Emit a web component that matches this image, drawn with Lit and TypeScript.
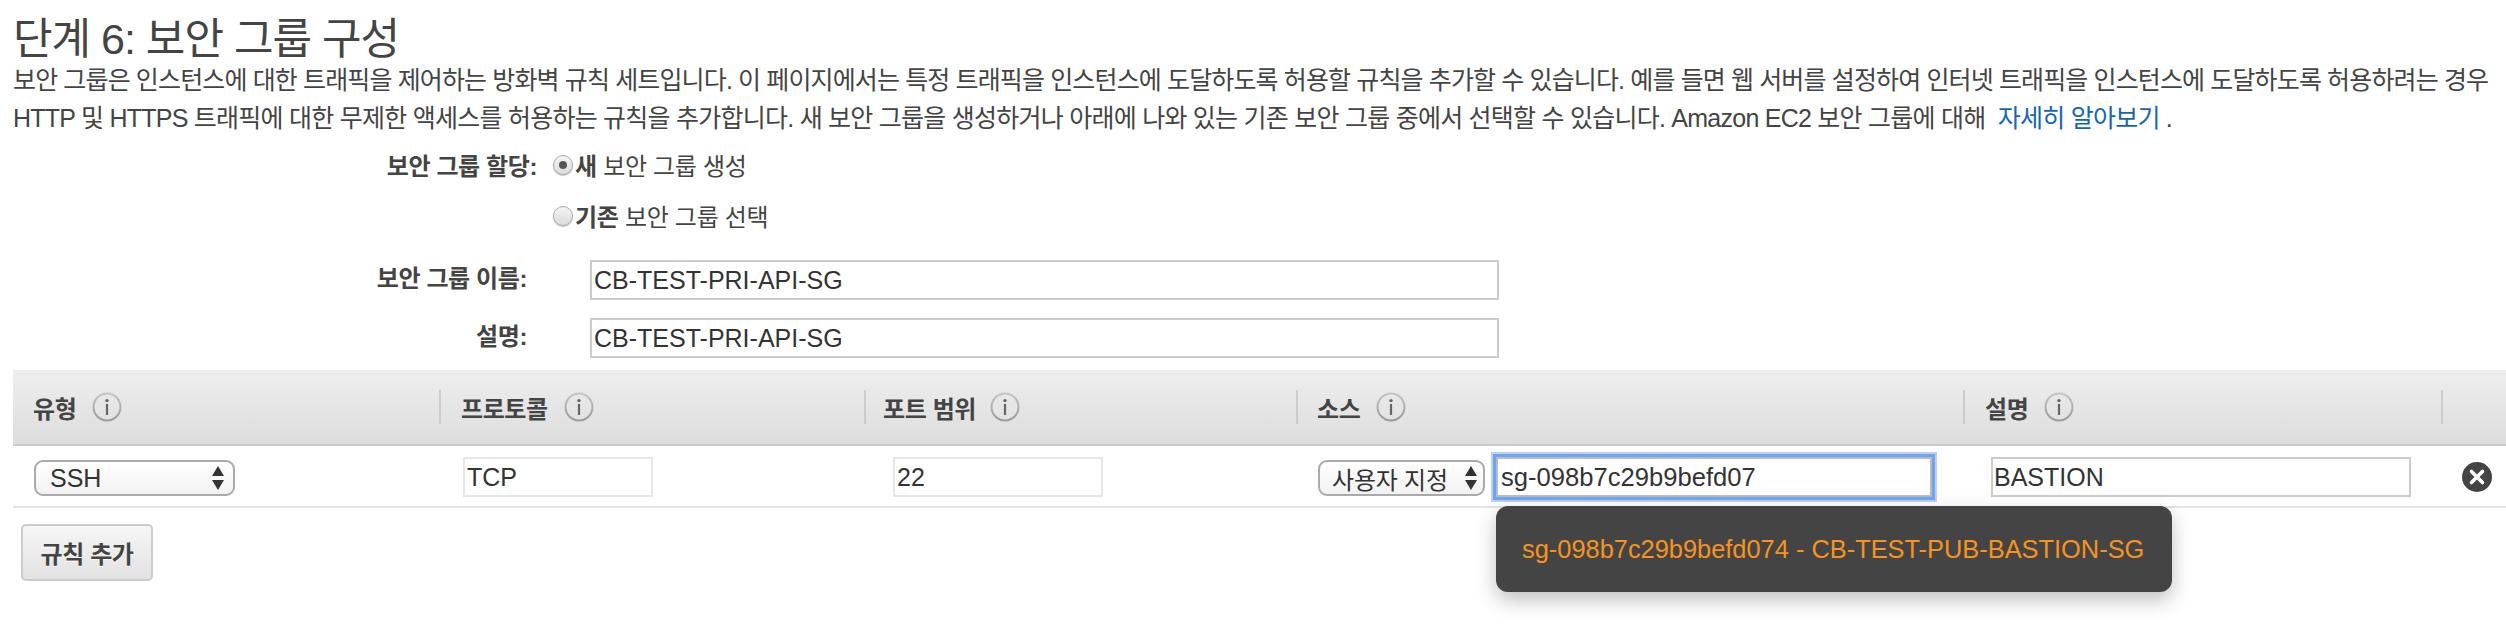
import { LitElement, html, css } from "lit";
import { customElement } from "lit/decorators.js";

const info = html`<svg class="info" width="30" height="30" viewBox="0 0 30 30">
  <defs><linearGradient id="ring" x1="0" y1="0" x2="0" y2="1"><stop offset="0" stop-color="#c4c4c4"/><stop offset="1" stop-color="#999"/></linearGradient></defs>
  <circle cx="15" cy="15" r="13.5" fill="none" stroke="url(#ring)" stroke-width="2"/>
  <circle cx="15" cy="8.6" r="1.7" fill="#666"/>
  <rect x="13.9" y="12" width="2.2" height="11" fill="#666"/>
</svg>`;

const arrows = html`<svg class="arrows" width="14" height="26" viewBox="0 0 14 26">
  <path d="M7 1 L13 11 H1 Z" fill="#333"/><path d="M7 25 L13 15 H1 Z" fill="#333"/>
</svg>`;

@customElement("app-root")
export class AppRoot extends LitElement {
  static styles = css`
    :host {
      display: block;
      width: 2506px;
      height: 630px;
      overflow: hidden;
      background: #fff;
      color: #444;
      font-family: "Liberation Sans", "Noto Sans CJK KR", sans-serif;
      font-size: 24px;
    }
    h1 {
      margin: 0;
      padding: 18px 0 0 13px;
      font-size: 43px;
      font-weight: 400;
      line-height: 43px;
      letter-spacing: -1px;
      color: #444;
    }
    p {
      margin: 0;
      padding-left: 13px;
      line-height: 38px;
      font-size: 25px;
      height: 78px;
    }
    .line { display: block; white-space: nowrap; }
    .l1 { letter-spacing: -0.86px; }
    .l2 { letter-spacing: -0.75px; }
    a { color: #1166bb; text-decoration: none; margin-left: 6px; }
    .form { display: flex; flex-direction: column; }
    .radio-row { display: flex; align-items: center; height: 51px; letter-spacing: -0.3px; }
    .label { font-weight: 700; text-align: right; flex: none; letter-spacing: -0.4px; }
    .label-radio { width: 537px; margin-right: 16px; }
    .indent { width: 553px; flex: none; }
    .radio {
      width: 20px;
      height: 20px;
      flex: none;
      border-radius: 50%;
      border: 1px solid #aaa;
      box-sizing: border-box;
      margin-right: 2px;
      background: linear-gradient(#f4f4f4, #dcdcdc);
      box-shadow: 0 1px 1px #bbb;
      display: flex;
      align-items: center;
      justify-content: center;
    }
    .radio.on::after {
      content: "";
      width: 8px;
      height: 8px;
      border-radius: 50%;
      background: #555;
    }
    .field-row { display: flex; align-items: center; height: 40px; }
    .field-row + .field-row { margin-top: 18px; }
    .field-row.first-field { margin-top: 19px; }
    .label-field { width: 527px; margin-right: 63px; position: relative; top: -4px; }
    input {
      font: inherit;
      font-size: 25px;
      color: #333;
      box-sizing: border-box;
      border: 2px solid #ccc;
      padding: 0 2px;
      height: 40px;
      background: #fff;
      outline: none;
      border-radius: 0;
      letter-spacing: 0;
    }
    .field-row input { width: 909px; }
    .table { margin: 12px 0 0 13px; width: 2493px; }
    .head, .row {
      display: grid;
      grid-template-columns: 426px 425px 432px 667px 478px 65px;
    }
    .head {
      height: 76px;
      box-sizing: border-box;
      border-bottom: 2px solid #ccc;
      background: linear-gradient(#eeeeee, #dddddd);
      align-items: center;
    }
    .h {
      display: flex;
      align-items: center;
      gap: 16px;
      height: 34px;
      padding-left: 20px;
      font-weight: 700;
      letter-spacing: -0.4px;
      border-left: 2px solid #ccc;
    }
    .h:first-child { border-left: 0; padding-left: 20px; }
    .h:nth-child(3) { gap: 14px; padding-left: 17px; }
    .h:nth-child(4) { padding-left: 19px; }
    .row {
      height: 62px;
      box-sizing: border-box;
      border-bottom: 2px solid #e4e4e4;
      position: relative;
    }
    .cell { display: flex; align-items: flex-start; padding-top: 11px; box-sizing: content-box; }
    .select {
      display: flex;
      align-items: center;
      justify-content: space-between;
      box-sizing: border-box;
      height: 36px;
      margin-top: 3px;
      border: 2px solid #aaa;
      border-radius: 9px;
      background: linear-gradient(#fff, #f2f2f2);
      color: #333;
      font-size: 25px;
      padding: 0 8px 0 14px;
    }
    .select.type { width: 201px; margin-left: 21px; }
    .select.src { width: 167px; margin-left: 22px; font-size: 24px; letter-spacing: -0.2px; padding: 0 5px 0 12px; white-space: nowrap; }
    .proto { width: 190px; margin-left: 24px; border-color: #e6e6e6; }
    .port { width: 210px; margin-left: 29px; border-color: #e6e6e6; }
    .focus {
      width: 436px;
      margin-left: 11px;
      padding-left: 3px;
      font-size: 25.6px;
      border: 2px solid #bbb;
      box-shadow: 0 0 0 3px #6fa4f5, 0 0 0 5px #b9d2fa;
    }
    .desc { width: 420px; margin-left: 28px; padding-left: 1px; }
    .x { margin-left: 21px; margin-top: 5px; }
    .tip {
      position: absolute;
      left: 1483px;
      top: 60px;
      width: 676px;
      height: 86px;
      box-sizing: border-box;
      border-radius: 12px;
      background: #444;
      color: #f7931e;
      font-size: 25.4px;
      display: flex;
      align-items: center;
      padding-left: 26px;
      white-space: nowrap;
      box-shadow: 0 8px 20px rgba(0, 0, 0, 0.25);
      z-index: 2;
    }
    button {
      display: block;
      margin: 16px 0 0 8px;
      width: 132px;
      height: 57px;
      padding: 0;
      font: inherit;
      font-weight: 700;
      letter-spacing: -0.4px;
      color: #444;
      border: 2px solid #ccc;
      border-radius: 5px;
      background: linear-gradient(#f6f6f6, #e2e2e2);
      text-shadow: 0 1px 0 #fff;
    }
  `;

  render() {
    return html`
      <h1>단계 6: 보안 그룹 구성</h1>
      <p><span class="line l1">보안 그룹은 인스턴스에 대한 트래픽을 제어하는 방화벽 규칙 세트입니다. 이 페이지에서는 특정 트래픽을 인스턴스에 도달하도록 허용할 규칙을 추가할 수 있습니다. 예를 들면 웹 서버를 설정하여 인터넷 트래픽을 인스턴스에 도달하도록 허용하려는 경우</span><span class="line l2">HTTP 및 HTTPS 트래픽에 대한 무제한 액세스를 허용하는 규칙을 추가합니다. 새 보안 그룹을 생성하거나 아래에 나와 있는 기존 보안 그룹 중에서 선택할 수 있습니다. Amazon EC2 보안 그룹에 대해 <a>자세히 알아보기</a> .</span></p>
      <div class="form">
        <div class="radio-row">
          <span class="label label-radio">보안 그룹 할당:</span>
          <span class="radio on"></span><span><b>새</b> 보안 그룹 생성</span>
        </div>
        <div class="radio-row">
          <span class="indent"></span>
          <span class="radio"></span><span><b>기존</b> 보안 그룹 선택</span>
        </div>
        <div class="field-row first-field">
          <span class="label label-field">보안 그룹 이름:</span>
          <input value="CB-TEST-PRI-API-SG" />
        </div>
        <div class="field-row">
          <span class="label label-field">설명:</span>
          <input value="CB-TEST-PRI-API-SG" />
        </div>
      </div>
      <div class="table">
        <div class="head">
          <div class="h">유형 ${info}</div>
          <div class="h">프로토콜 ${info}</div>
          <div class="h">포트 범위 ${info}</div>
          <div class="h">소스 ${info}</div>
          <div class="h">설명 ${info}</div>
          <div class="h"></div>
        </div>
        <div class="row">
          <div class="cell"><div class="select type">SSH ${arrows}</div></div>
          <div class="cell"><input class="proto" value="TCP" /></div>
          <div class="cell"><input class="port" value="22" /></div>
          <div class="cell">
            <div class="select src">사용자 지정 ${arrows}</div>
            <input class="focus" value="sg-098b7c29b9befd07" />
          </div>
          <div class="cell"><input class="desc" value="BASTION" /></div>
          <div class="cell">
            <svg class="x" width="30" height="30" viewBox="0 0 30 30">
              <circle cx="15" cy="15" r="15" fill="#444"/>
              <path d="M9.5 9.5 L20.5 20.5 M20.5 9.5 L9.5 20.5" stroke="#fff" stroke-width="3.6" stroke-linecap="round"/>
            </svg>
          </div>
          <div class="tip">sg-098b7c29b9befd074 - CB-TEST-PUB-BASTION-SG</div>
        </div>
        <button>규칙 추가</button>
      </div>
    `;
  }
}
